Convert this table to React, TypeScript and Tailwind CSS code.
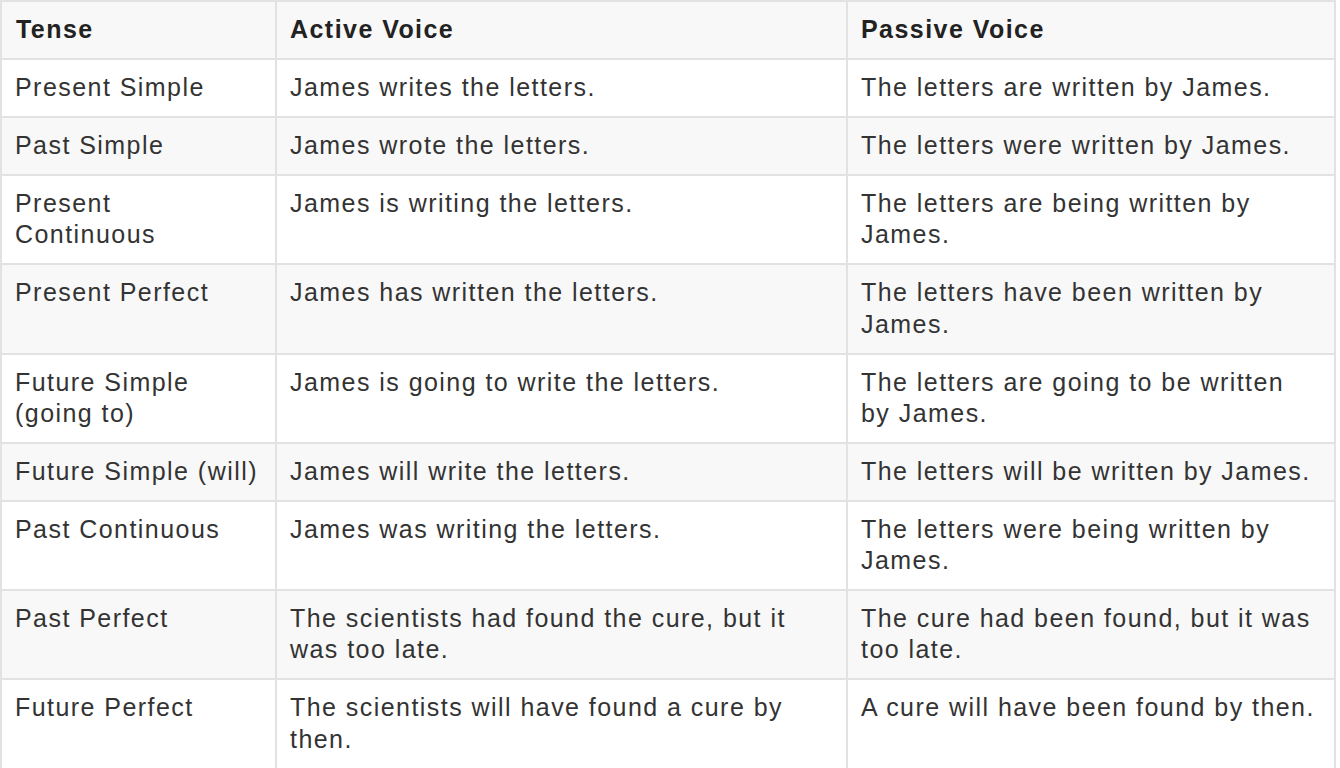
const rows: [string, string, string][] = [
  ['Present Simple', 'James writes the letters.', 'The letters are written by James.'],
  ['Past Simple', 'James wrote the letters.', 'The letters were written by James.'],
  ['Present\nContinuous', 'James is writing the letters.', 'The letters are being written by\nJames.'],
  ['Present Perfect', 'James has written the letters.', 'The letters have been written by\nJames.'],
  ['Future Simple\n(going to)', 'James is going to write the letters.', 'The letters are going to be written\nby James.'],
  ['Future Simple (will)', 'James will write the letters.', 'The letters will be written by James.'],
  ['Past Continuous', 'James was writing the letters.', 'The letters were being written by\nJames.'],
  ['Past Perfect', 'The scientists had found the cure, but it\nwas too late.', 'The cure had been found, but it was\ntoo late.'],
  ['Future Perfect', 'The scientists will have found a cure by\nthen.', 'A cure will have been found by then.'],
];

const cell =
  'border-2 border-[#e2e2e2] px-[13px] pt-[12px] pb-[12.7px] align-top whitespace-pre';

export default function App() {
  return (
    <div className="h-[768px] overflow-hidden bg-white font-['Liberation_Sans',Arial,sans-serif] text-[25px] leading-[31.3px] tracking-[1.45px] text-[#333]">
      <table className="w-[1336px] table-fixed border-collapse">
        <colgroup>
          <col className="w-[275px]" />
          <col className="w-[571px]" />
          <col />
        </colgroup>
        <thead>
          <tr className="bg-[#f8f8f8]">
            <th className={`${cell} pl-[14px] text-left font-bold text-[#222]`}>Tense</th>
            <th className={`${cell} text-left font-bold text-[#222]`}>Active Voice</th>
            <th className={`${cell} text-left font-bold text-[#222]`}>Passive Voice</th>
          </tr>
        </thead>
        <tbody>
          {rows.map((r, i) => (
            <tr key={i} className={i % 2 === 1 ? 'bg-[#f8f8f8]' : 'bg-white'}>
              {r.map((t, j) => (
                <td key={j} className={cell}>
                  {t}
                </td>
              ))}
            </tr>
          ))}
        </tbody>
      </table>
    </div>
  );
}
